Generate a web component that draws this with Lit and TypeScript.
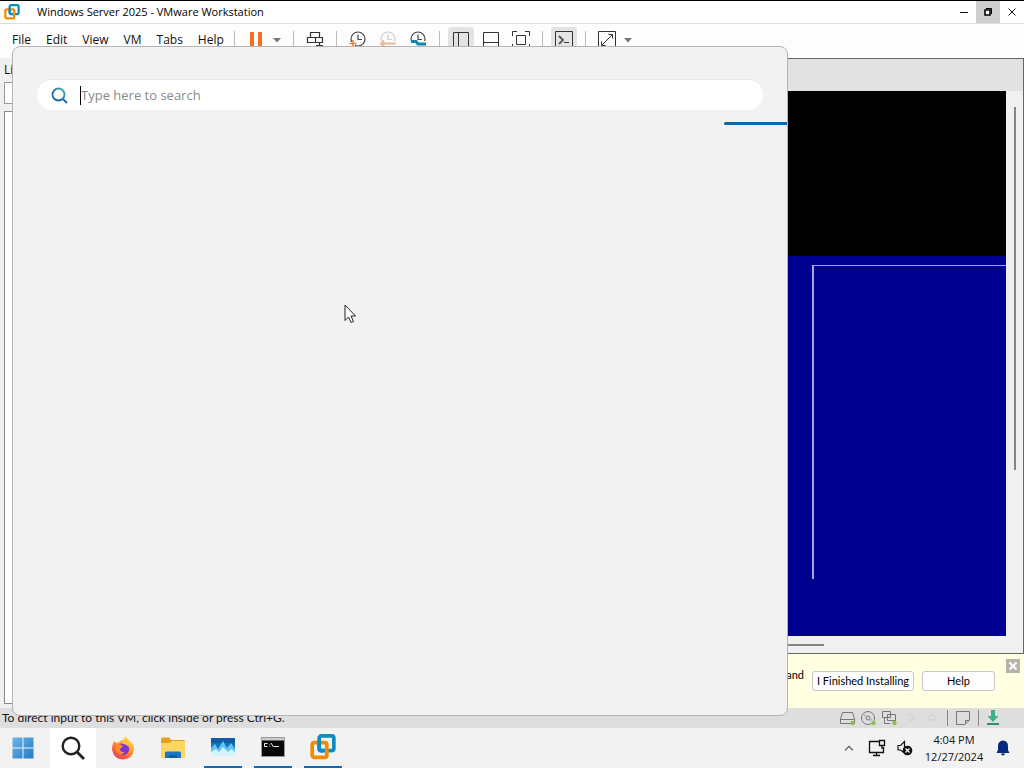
import { LitElement, html, svg, css } from "lit";
import { customElement } from "lit/decorators.js";

const icon = (w: number, h: number, body: unknown) =>
  html`<svg width=${w} height=${h} viewBox="0 0 ${w} ${h}" fill="none" aria-hidden="true">${body}</svg>`;

const vmLogo = (s: number) => html`<svg width=${s} height=${s} viewBox="0 0 24 24" fill="none" aria-hidden="true">
  <rect x="8.5" y="1.8" width="13.5" height="13.5" rx="2" stroke="#0f8bc0" stroke-width="3.4"/>
  <rect x="2" y="8" width="13.5" height="13.5" rx="2" stroke="#f38b00" stroke-width="3.4"/>
  <path d="M8.5 6V13.3Q8.5 15.3 10.5 15.3H13" stroke="#0f8bc0" stroke-width="3.4"/></svg>`;

const clock = (c: string) => svg`<circle cx="9" cy="8" r="7" stroke=${c} stroke-width="1.2"/><path d="M9 3.5V8.5H13" stroke=${c} stroke-width="1.2"/>`;

const icons = {
  pause: icon(12, 16, svg`<path d="M0 0H4V16H0zM8 0H12V16H8z" fill="#f36f21"/>`),
  keys: icon(18, 18, svg`<path d="M4.5 1.5H13.5V6.5H4.5zM1.5 6.5H9.5V11.5H1.5zM9.5 6.5H16.5V11.5H9.5zM13.5 11.5V16M10 14.5H17" stroke="#333" stroke-width="1.2"/>`),
  snap: icon(18, 18, svg`${clock("#444")}<path d="M0 11H6V18H0z" fill="#fff"/><path d="M4 9V17M0.500 12.500H7.500" stroke="#e5823a" stroke-width="1.5"/>`),
  revert: icon(18, 18, svg`${clock("#ccc")}<path d="M0 10H18V18H0z" fill="#fff"/><path d="M2 12.5H17M5 9.5L2 12.5L5 15.5" stroke="#eab894" stroke-width="2"/>`),
  manage: icon(18, 18, svg`${clock("#444")}<path d="M0 10H18V18H0z" fill="#fff"/><path d="M2 10.500H7L9 13H17" stroke="#0e86ad" stroke-width="3"/>`),
  library: icon(18, 18, svg`<path d="M1.5 1.5H16.5V16.5H1.5zM6.5 1.5V16.5" stroke="#333"/>`),
  bottom: icon(18, 18, svg`<path d="M1.5 1.5H16.5V16.5H1.5zM1.5 11.5H16.5" stroke="#333"/>`),
  full: icon(18, 18, svg`<path d="M0.5 5V0.5H5M13 0.5H17.5V5M17.5 13V17.5H13M5 17.5H0.5V13M4.5 4.5H13.5V13.5H4.5z" stroke="#333"/>`),
  term: icon(18, 18, svg`<path d="M0.5 0.5H17.5V17.5H0.5z" stroke="#333"/><path d="M4 5L8 9L4 13" stroke="#555" stroke-width="1.8"/><path d="M9 11.5H14" stroke="#333"/>`),
  expand: icon(18, 18, svg`<path d="M0.5 0.5H17.5V17.5H0.5zM4 14L14 4M10.5 3.5H14.5V7.5M3.5 10.5V14.5H7.5" stroke="#333"/>`),
  arrow: icon(8, 5, svg`<path d="M0 0H8L4 4.5z" fill="#777"/>`),
  win: icon(22, 22, svg`<defs><linearGradient id="wg" x1="0" y1="0" x2="22" y2="22" gradientUnits="userSpaceOnUse"><stop stop-color="#6cb8e8"/><stop offset="1" stop-color="#2277c8"/></linearGradient></defs><path d="M0.5 0.5H10.5V10.5H0.5zM11.5 0.5H21.5V10.5H11.5zM0.5 11.5H10.5V21.5H0.5zM11.5 11.5H21.5V21.5H11.5z" fill="url(#wg)"/>`),
  search: icon(24, 24, svg`<circle cx="10" cy="10" r="8.3" stroke="#222" stroke-width="2.4"/><path d="M16 16L23 23" stroke="#222" stroke-width="2.8"/>`),
  firefox: icon(24, 24, svg`<defs><linearGradient id="ff" x1="18" y1="2" x2="5" y2="22" gradientUnits="userSpaceOnUse"><stop stop-color="#ffe14a"/><stop offset=".5" stop-color="#ff8a2a"/><stop offset="1" stop-color="#f5325e"/></linearGradient></defs>
    <path d="M3.5 5L5 7L7.5 6.5Q9 4 12 4Q13 1 15 0.5Q16 3 19 5Q23.5 9 23 14Q21.500 23 12 23.500Q2.500 23 1 13.500Q1 8 3.500 5z" fill="url(#ff)"/>
    <circle cx="12.200" cy="13" r="6" fill="#7a36d0"/><path d="M5 9Q9 7 12 10L10.500 12Q8.500 12 9 14Q10.500 17 14 15.500Q11 20 7 17.500Q4 14 5 9z" fill="#ff8b24"/><path d="M11 5Q17 6 18 12Q16 8 11.500 8z" fill="#ffc13a"/>`),
  folder: icon(26, 22, svg`<path d="M1 2Q1 0.5 2.500 0.500H9L11.500 3H24Q25 3 25 4V20Q25 21 24 21H2Q1 21 1 20z" fill="#e0a21c"/><path d="M1 6H10L12 4H25V20Q25 21 24 21H2Q1 21 1 20z" fill="#fdd561"/><path d="M5 21V16Q5 14.500 6.500 14.500H19.500Q21 14.500 21 16V21z" fill="#1976c5"/><path d="M9 18H17V21H9z" fill="#125b9f"/>`),
  monitor: icon(24, 18, svg`<path d="M0 0H24V18H0z" fill="#1373bd"/><path d="M0 0H24V5H0z" fill="#0d5ca6"/><path d="M0 18V10L4 6L7 11L12 3L16 10L20 5L24 11V18z" fill="#65c4f0"/><path d="M0 18V14L5 11L8 14L12 9L17 14L20 11L24 14V18z" fill="#d5f2ff"/>`),
  cmd: icon(24, 20, svg`<path d="M0.500 0.500H23.500V19.500H0.500z" fill="#080808" stroke="#999"/><path d="M1 1H23V3.500H1z" fill="#ccc"/><path d="M6.500 6.500H3.500V9.500H6.500M8.500 7V7.500M8.500 9V9.500M10 6L12.500 10M13 9.500H18" stroke="#eee"/>`),
  chevron: icon(10, 6, svg`<path d="M1 5.300L5 1.300L9 5.300" stroke="#555" stroke-width="1.200"/>`),
  net: icon(18, 18, svg`<path d="M11 2.500H1.500V13.500H15.500V8M8.500 13.500V16.500M5 16.500H12M11.500 1.500H16.500V6.500H11.500zM14 7V10" stroke="#111" stroke-width="1.300"/>`),
  mute: icon(16, 16, svg`<path d="M1 5.500H3.500L7.500 1.500V13L3.500 10H1z" stroke="#111" stroke-width="1.200"/><circle cx="10.500" cy="10.500" r="4.800" fill="#111"/><path d="M8.500 8.500L12.500 12.500M12.500 8.500L8.500 12.500" stroke="#fff" stroke-width="1.200"/>`),
  bell: icon(14, 16, svg`<path d="M7 0.500Q12 1 12 6V10L13.500 13H0.500L2 10V6Q2 1 7 0.500zM5 13.500H9Q9 15.500 7 15.500Q5 15.500 5 13.500z" fill="#052a7c"/>`),
  disk: icon(17, 16, svg`<path d="M3.500 2.500H13.500L15.500 9V13.500H1.500V9zM1.500 9.500H15.500" stroke="#777"/><circle cx="13.500" cy="13" r="2.200" fill="#8bc34a"/>`),
  cd: icon(17, 16, svg`<circle cx="8" cy="8" r="6.500" stroke="#777"/><circle cx="8" cy="8" r="2" stroke="#777"/><path d="M4 6L6 4.500M10 11L12 9" stroke="#999"/><circle cx="13.500" cy="13" r="2.200" fill="#8bc34a"/>`),
  lan: icon(17, 16, svg`<path d="M1.500 1.500H9.500V7.500H1.500zM6.500 4.500H14.500V10.500H6.500zM3.500 8V13.500H9" stroke="#777"/><circle cx="13.500" cy="13" r="2.200" fill="#8bc34a"/>`),
  usb: icon(17, 16, svg`<path d="M5 5L8.500 3L12 8L8 11L5 8" stroke="#cfcfcf"/>`),
  sound: icon(17, 16, svg`<path d="M2 10H15M5 7L9 4L13 7" stroke="#cdcdcd"/>`),
  note: icon(16, 16, svg`<path d="M1.500 1.500H14.500V10L10 14.500H1.500zM14 10.500H10.500V14" stroke="#777"/>`),
  down: icon(14, 16, svg`<path d="M7 0V8" stroke="#3fae8c" stroke-width="4"/><path d="M1.500 6H12.500L7 12z" fill="#3fae8c"/><path d="M1 14H13" stroke="#318c78" stroke-width="2"/>`),
  close: icon(14, 14, svg`<path d="M0 0H14V14H0z" fill="#b4b4ac"/><path d="M3.500 3.500L10.500 10.500M10.500 3.500L3.500 10.500" stroke="#fff" stroke-width="2.200"/>`),
  find: icon(17, 17, svg`<defs><linearGradient id="sg" x1="3" y1="14" x2="14" y2="2" gradientUnits="userSpaceOnUse"><stop stop-color="#175ca8"/><stop offset=".6" stop-color="#2386b5"/><stop offset="1" stop-color="#43b99b"/></linearGradient></defs><circle cx="7.500" cy="7.500" r="6" stroke="url(#sg)" stroke-width="1.800"/><path d="M12 12L16 16" stroke="#1c68ac" stroke-width="2"/>`),
};

@customElement("app-title-bar")
class TitleBar extends LitElement {
  static styles = css`
    :host { display: flex; height: 22px; border-top: 1px solid #000; border-bottom: 1px solid #dedede; background: #fff; }
    .name { display: flex; align-items: center; flex: 1; gap: 17px; padding-left: 4px; font-size: 11px; color: #000; }
    svg { display: block; }
    button { display: grid; place-items: center; width: 24px; padding: 0; border: 0; background: none; }
    .on { background: #cfcfcf; }
  `;
  render() {
    return html`<div class="name">${vmLogo(16)}<span>Windows Server 2025 - VMware Workstation</span></div>
      <button aria-label="Minimize">${icon(8, 8, svg`<path d="M0 4.500H8" stroke="#111"/>`)}</button>
      <button class="on" aria-label="Restore">${icon(8, 8, svg`<path d="M1 2H6V7H1z" fill="#fff" stroke="#000" stroke-width="1.600"/><path d="M2 0.500H7.500V6" stroke="#000"/>`)}</button>
      <button aria-label="Close">${icon(8, 8, svg`<path d="M0.500 0.500L7.500 7.500M7.500 0.500L0.500 7.500" stroke="#111"/>`)}</button>`;
  }
}

@customElement("app-menu-bar")
class MenuBar extends LitElement {
  static styles = css`
    :host { display: flex; align-items: center; height: 32px; padding-bottom: 2px; background: #fdfdfd; }
    nav { display: flex; gap: 15px; min-width: 222px; padding-left: 12px; }
    button { display: grid; place-items: center; padding: 0; border: 0; background: none; font: inherit; color: #111; }
    .group { display: flex; align-items: center; padding: 0 6px; border-left: 1px solid #bbb; height: 18px; }
    .tool { width: 30px; height: 26px; }
    .drop { width: 12px; height: 26px; }
    .first { padding-right: 10px; }
    .on { width: 26px; margin: 0 2px; border-radius: 3px; background: #e4e4e4; }
    svg { display: block; }
  `;
  tool(name: string, art: unknown, on = false) {
    return html`<button class="tool ${on ? "on" : ""}" aria-label=${name}>${art}</button>`;
  }
  render() {
    return html`<nav>${["File", "Edit", "View", "VM", "Tabs", "Help"].map((m) => html`<button>${m}</button>`)}</nav>
      <div class="group first">${this.tool("Suspend", icons.pause)}<button class="drop" aria-label="Power options">${icons.arrow}</button></div>
      <div class="group">${this.tool("Send Ctrl+Alt+Del", icons.keys)}</div>
      <div class="group">${this.tool("Take snapshot", icons.snap)}${this.tool("Revert", icons.revert)}${this.tool("Manage snapshots", icons.manage)}</div>
      <div class="group">${this.tool("Library", icons.library, true)}${this.tool("Thumbnails", icons.bottom)}${this.tool("Full screen", icons.full)}</div>
      <div class="group">${this.tool("Console", icons.term, true)}</div>
      <div class="group">${this.tool("Stretch", icons.expand)}<button class="drop" aria-label="Stretch options">${icons.arrow}</button></div>`;
  }
}

@customElement("app-search-panel")
class SearchPanel extends LitElement {
  static styles = css`
    :host { display: block; box-sizing: border-box; border: 1px solid #b5b5b5; border-radius: 8px; background: #f2f2f2; overflow: hidden; }
    label { display: flex; align-items: center; gap: 12px; height: 31px; margin: 32px 24px 12px; padding: 0 14px; border-radius: 15px; background: #fff; border-top: 1px solid #e6e6e6; box-sizing: border-box; }
    .field { display: flex; align-items: center; flex: 1; }
    .caret { width: 1px; height: 19px; background: #000; }
    input { flex: 1; min-width: 0; padding: 0; border: 0; outline: 0; background: none; font-family: inherit; font-size: 13px; line-height: 18px; color: #111; }
    input::placeholder { color: #8a8a8a; opacity: 1; }
    .progress { width: 63px; height: 3px; margin-left: auto; border-radius: 2px 0 0 2px; background: #0b6aa5; }
  `;
  render() {
    return html`<label>${icons.find}<span class="field"><span class="caret"></span><input type="text" aria-label="Search" placeholder="Type here to search" /></span></label>
      <div class="progress"></div>`;
  }
}

@customElement("app-taskbar")
class Taskbar extends LitElement {
  static styles = css`
    :host { display: flex; justify-content: space-between; height: 40px; background: #f2f2f3; }
    .apps, .tray { display: flex; align-items: stretch; }
    button { display: grid; place-items: center; padding: 0; border: 0; background: none; font: inherit; color: #111; }
    .apps { gap: 4px; }
    .apps button { width: 46px; box-sizing: border-box; border-bottom: 1px solid transparent; }
    .apps .active { background: #fff; }
    .apps .running { width: 38px; margin: 0 4px; border-bottom: 2px solid #0d6cb5; }
    .tray button { width: 28px; }
    .tray .clock { display: block; width: 70px; font-size: 11px; line-height: 17px; text-align: center; white-space: nowrap; }
    .tray { padding-right: 7px; }
    svg { display: block; }
  `;
  render() {
    return html`<div class="apps">
        <button aria-label="Start">${icons.win}</button><button class="active" aria-label="Search">${icons.search}</button>
        <button aria-label="Firefox">${icons.firefox}</button><button aria-label="File Explorer">${icons.folder}</button>
        <button class="running" aria-label="Task Manager">${icons.monitor}</button><button class="running" aria-label="Command Prompt">${icons.cmd}</button>
        <button class="running" aria-label="VMware Workstation">${vmLogo(26)}</button></div>
      <div class="tray"><button aria-label="Hidden icons">${icons.chevron}</button><button aria-label="Network">${icons.net}</button><button aria-label="Volume">${icons.mute}</button>
        <button class="clock">4:04 PM<br />12/27/2024</button><button aria-label="Notifications">${icons.bell}</button></div>`;
  }
}

@customElement("app-root")
class AppRoot extends LitElement {
  static styles = css`
    :host { display: flex; flex-direction: column; position: relative; min-height: 100vh; background: #f0f0f0; font: 12px/16px "Open Sans", "Noto Sans", sans-serif; color: #111; }
    .work { display: flex; flex: 1; min-height: 0; }
    .side { display: flex; flex-direction: column; width: 200px; padding: 4px; box-sizing: border-box; background: #f0f0f0; }
    .side label { display: flex; flex-direction: column; gap: 4px; }
    .side input { height: 22px; box-sizing: border-box; border: 1px solid #999; background: #fff; }
    .list { flex: 1; margin-top: 7px; border: 1px solid #888; background: #fff; }
    .main { display: flex; flex-direction: column; flex: 1; min-width: 0; }
    .view { display: flex; flex-direction: column; flex: 1; border: 1px solid #666; border-left: 0; }
    .tabs { height: 32px; background: #e2e2e2; }
    .body { display: grid; grid-template-columns: 1fr 17px; grid-template-rows: 1fr 17px; flex: 1; }
    .screen { display: flex; flex-direction: column; background: #000; }
    .console { display: flex; flex: 1; margin-top: 165px; padding: 9px 0 57px 612px; background: #000090; }
    .frame { flex: 1; border: solid #a5a5dc; border-width: 1px 0 0 2px; }
    .vbar { justify-self: center; width: 2px; height: 363px; margin-top: 16px; background: #858585; }
    .hbar { align-self: center; width: 624px; height: 2px; background: #858585; }
    .banner { display: flex; align-items: center; justify-content: flex-end; gap: 8px; height: 54px; background: #ffffe1; font-family: Lato, sans-serif; font-size: 11px; color: #000; }
    .hint { margin-bottom: 12px; }
    .banner button { height: 20px; padding: 0; border: 1px solid #c6c6c6; border-radius: 3px; background: #fdfdfd; font: inherit; color: #000; white-space: nowrap; }
    .banner .done { width: 102px; }
    .banner .help { width: 73px; }
    .banner .close { align-self: flex-start; width: 14px; height: 14px; margin: 5px 4px 0 3px; border: 0; background: none; }
    .status { display: flex; align-items: center; justify-content: space-between; height: 20px; padding: 0 24px 0 2px; background: #dedede; font-family: Lato, sans-serif; }
    .devices { display: flex; align-items: center; gap: 4px; }
    .sep { width: 1px; height: 16px; margin: 0 3px; background: #888; }
    .panel { position: absolute; top: 46px; bottom: 52px; left: 12px; right: 236px; }
    .pointer { position: absolute; left: 344px; top: 304px; }
    svg { display: block; }
  `;
  render() {
    return html`<app-title-bar></app-title-bar><app-menu-bar></app-menu-bar>
      <div class="work">
        <aside class="side"><label>Library<input type="text" /></label><div class="list"></div></aside>
        <main class="main">
          <div class="view"><div class="tabs"></div>
            <div class="body"><div class="screen"><div class="console"><div class="frame"></div></div></div><div class="vbar"></div><div class="hbar"></div></div></div>
          <div class="banner"><span class="hint">and</span><button class="done">I Finished Installing</button><button class="help">Help</button><button class="close" aria-label="Dismiss">${icons.close}</button></div>
        </main>
      </div>
      <div class="status"><span>To direct input to this VM, click inside or press Ctrl+G.</span>
        <div class="devices">${icons.disk}${icons.cd}${icons.lan}${icons.usb}${icons.sound}<span class="sep"></span>${icons.note}<span class="sep"></span>${icons.down}</div></div>
      <app-taskbar></app-taskbar>
      <app-search-panel class="panel"></app-search-panel>
      <div class="pointer">${icon(14, 20, svg`<path d="M1 1V16.500L4.500 13L7 18.500L9.500 17.500L7 12H11.500z" fill="#fff" stroke="#222"/>`)}</div>`;
  }
}
